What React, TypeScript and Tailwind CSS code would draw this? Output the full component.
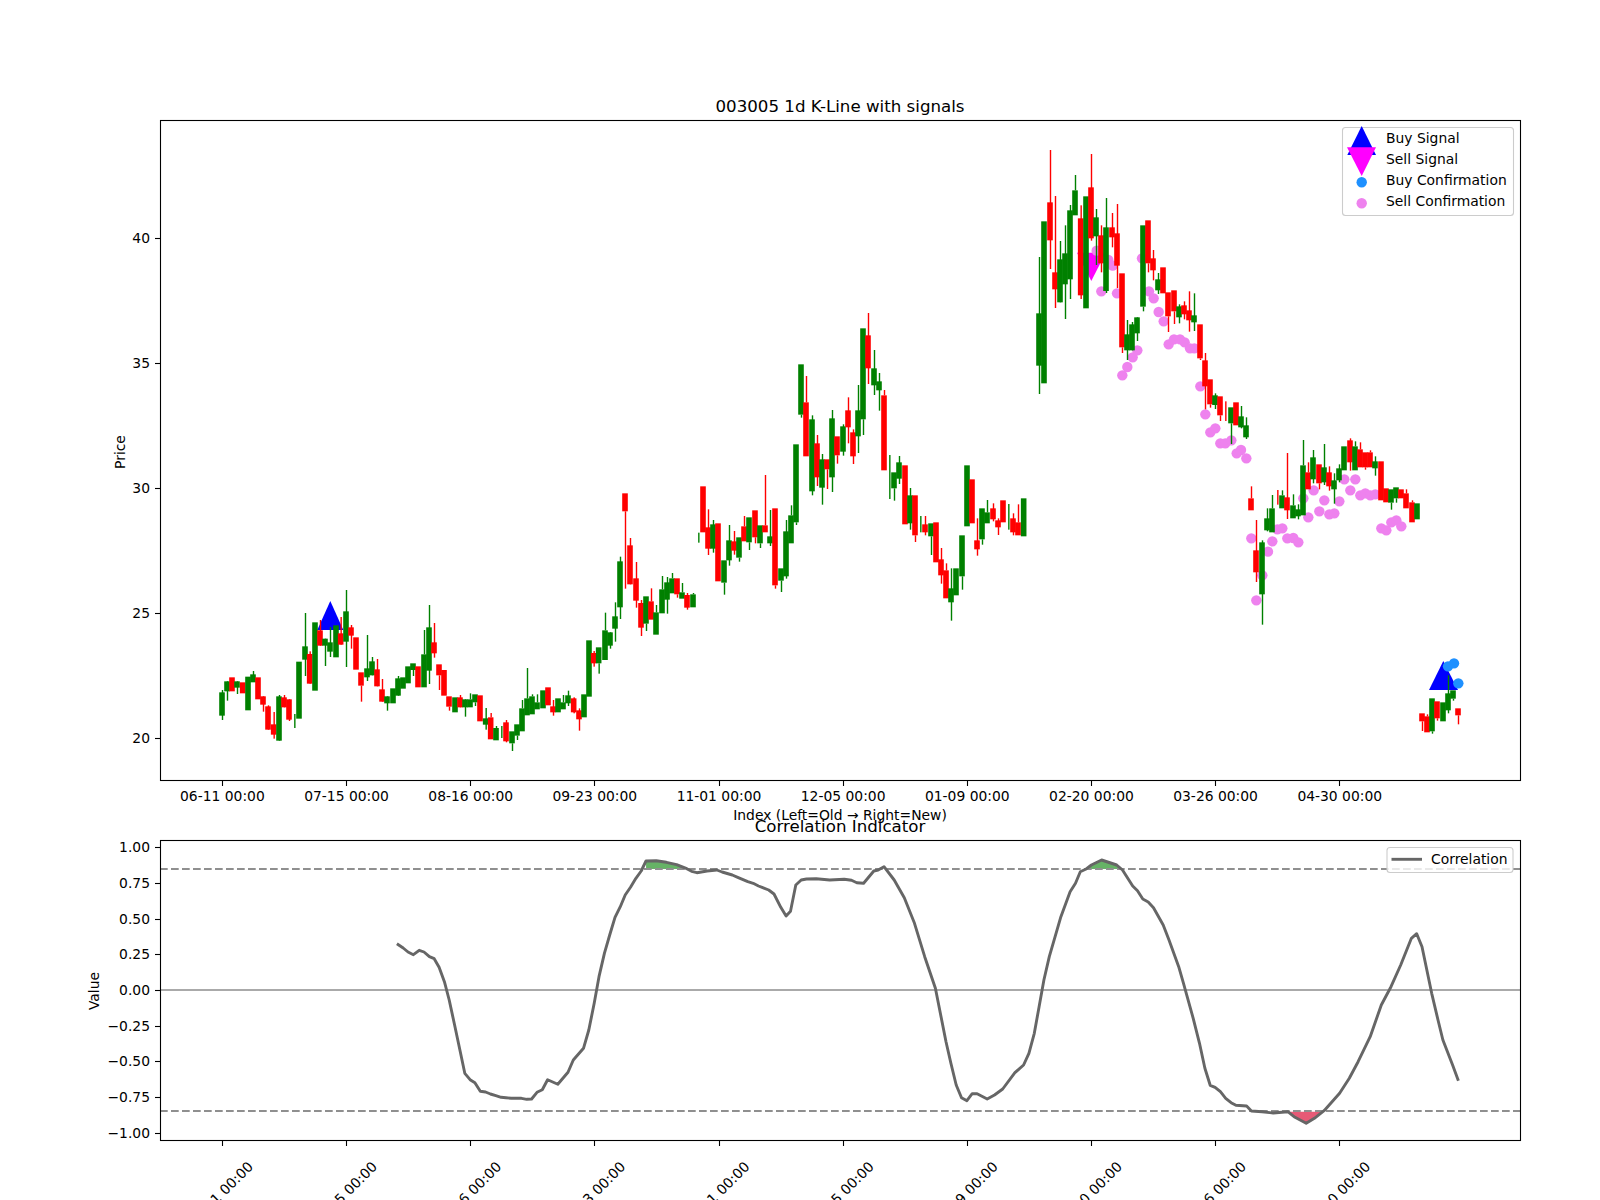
import React from 'react';

// candle rows: [x, green, bodyTop, bodyBottom, wickTop, wickBottom]
// measured in crops scaled 3x, so each block keeps its own origin
type Row = [number, number, number | null, number | null, number?, number?];

const blockA: Row[] = [
  [216,1,637,707,630,720],[231,1,604,634,604,662],[246,0,592,634],[261,1,604,623,604,642],[278,0,607,640],
  [294,1,590,691],[309,1,583,607,573,590],[324,0,592,658],[339,0,649,674,649,695],[354,0,679,749,676,749],
  [371,0,733,764,696,776],[387,1,649,782,645,782],[402,0,652,682,645,682],[417,0,658,719,658,723],[433,1,null,null,702,744],
  [447,1,545,716],[465,1,499,539,399,588],[479,0,522,611,514,611],[495,1,427,632],[510,0,451,497,420,497],
  [525,1,476,497,476,558],[540,1,487,515,441,531],[558,1,436,532],[572,0,460,494,411,494],[588,1,394,485,330,561],
  [603,0,442,467,435,506],[618,0,472,569],[633,0,577,617,617,665],[651,1,565,592,465,603],[666,1,544,586,531,586],
  [681,0,568,619,537,619],[696,0,628,665,597,665],[711,1,649,670,649,692],[729,1,625,670],[744,1,595,647,588,647],
  [759,1,592,626],[774,1,559,610],[789,1,550,570,570,588],[804,0,559,622],[822,1,523,622,450,523],
  [837,1,442,572,375,612],[852,0,487,520,429,533],[867,0,553,586,586,630],[882,0,570,647],[897,0,649,680,680,692],
  [915,1,652,697],[930,0,652,682,645,682],[945,1,658,682,658,710],[960,1,658,682,640,658],[975,1,643,667,667,678],
  [990,0,646,724],[1007,1,715,734,684,749],[1022,0,712,778,699,712],[1038,1,744,781,738,744],[1054,1,null,null,738,774],
  [1068,0,727,784,720,787],[1086,1,754,790,790,813],[1101,1,733,767,767,780],[1116,1,685,754,660,685],[1131,1,655,706,564,655],
  [1146,1,649,703,643,649],[1161,1,667,688,643,667],[1179,1,631,685],[1194,0,622,676],[1209,0,679,697,660,707],
  [1224,1,655,697],[1239,1,667,688,645,667],[1254,1,646,670,632,678],[1271,0,655,697,652,700],[1287,0,691,718,685,752],
  [1302,1,643,712],[1317,1,481,650],[1331,0,519,550,513,560],[1346,1,502,550,550,581],
];

const blockB: Row[] = [
  [45,1,991,1080,938,991],[60,1,997,1037,997,1046],[75,1,949,986,907,1025],[90,1,784,922,770,957],[105,0,580,634,634,866],
  [120,0,736,853,714,853],[138,0,835,902,786,923],[153,0,909,983,900,1008],[168,1,889,971,971,993],[183,0,904,959,865,904],
  [198,1,937,1004,915,937],[216,1,868,940,828,868],[231,1,847,899,831,941],[246,1,835,880,819,835],[261,0,835,883,883,893],
  [276,1,877,896,849,877],[291,0,885,923,879,929],[309,1,883,922,879,883],[325,1,null,null,698,728],[339,0,559,697],
  [354,0,682,746,628,765],[369,1,673,746,660,758],[384,0,670,844],[402,1,781,848,848,884],[417,1,721,781,675,797],
  [432,0,724,752,693,764],[447,1,712,773,773,785],[462,0,679,724,648,679],[477,1,652,727,727,750],[495,0,631,712,712,730],
  [510,1,676,730,730,744],[525,0,676,697,525,676],[540,1,709,730,630,738],[555,0,625,856,856,866],[573,1,805,842,842,876],
  [588,1,694,829,660,836],[603,1,646,730,616,646],[618,1,433,667,667,675],[633,1,193,344,344,353],[648,0,307,469,228,307],
  [666,1,358,574,346,586],[681,0,430,532,405,558],[696,1,478,563,462,614],[711,0,478,508,508,567],[726,1,355,532,330,576],
  [741,0,409,466,466,491],[759,1,379,455,373,467],[774,0,331,382,292,430],[789,0,397,469,388,492],[804,1,331,409,255,459],
  [819,1,85,358,358,405],[834,0,106,205,39,252],[852,1,205,256,150,285],[867,1,244,271,219,332],[882,0,286,511,270,286],
  [898,1,null,null,465,597],[912,1,517,565,565,602],[927,1,487,536,468,552],[945,0,496,673],[960,1,586,670,564,689],
  [975,0,586,706,706,726],[991,1,null,null,648,697],[1005,0,673,697,648,706],[1023,1,670,709,709,765],[1038,0,667,787],
  [1053,0,778,826,744,851],[1068,0,811,895,790,811],[1083,1,865,907,805,962],[1098,1,805,886],[1116,1,706,829,829,869],
  [1131,1,496,679],[1146,0,538,670],[1161,0,721,748,655,767],[1176,1,625,718,718,734],[1191,1,637,670,600,637],
  [1209,0,625,658,610,664],[1224,0,661,682,655,705],[1239,0,601,667],[1255,1,null,null,612,689],[1269,0,655,697,640,706],
  [1284,0,667,706,613,667],[1301,1,595,709],
];

const blockC: Row[] = [
  [57,1,610,767,441,852],[72,1,334,820],[90,0,277,391,120,477],[105,0,487,538,258,594],[120,1,448,577,393,577],
  [135,1,430,523,346,627],[150,1,301,508,285,567],[165,1,241,316,195,241],[182,0,325,556,286,567],[198,1,259,595],
  [213,0,232,385,132,392],[228,1,322,379,297,465],[243,0,376,460,346,487],[258,1,352,543,264,549],[276,0,352,382,309,412],
  [291,0,370,467,282,534],[306,0,490,712,712,729],[321,1,673,721,630,750],[336,1,643,721,636,721],[351,1,622,670,622,693],
  [369,1,346,590,590,604],[384,0,331,460,460,487],[399,0,445,481,420,511],[414,1,508,541,489,552],[429,0,472,550],
  [444,0,547,619,619,666],[462,0,541,604,604,642],[477,1,589,622,583,640],[492,0,586,613,574,628],[507,0,601,631,544,665],
  [522,1,616,637,550,663],[540,0,643,745,745,750],[555,0,751,829,729,898],[570,0,808,883,883,893],[585,1,856,885,850,897],
  [600,0,859,916,916,933],[616,0,null,null,874,933],[633,1,892,940,940,1002],[648,0,877,946],[663,1,919,952,888,955],
  [678,1,946,982,922,987],
];

const blockD: Row[] = [
  [93,0,235,271,199,235],[108,0,391,457,300,486],[126,1,367,523,361,614],[141,1,295,331,265,334],[156,1,265,337,225,265],
  [172,0,null,null,210,254],[186,1,226,265,211,226],[201,0,232,271,99,297],[219,1,256,295,223,256],[234,1,268,289,253,298],
  [249,1,136,286,60,136],[264,0,157,208,127,157],[279,1,112,178,90,190],[297,0,133,190,190,208],[312,1,142,187,72,195],
  [327,0,157,199,139,212],[342,1,181,208,160,251],[357,1,145,181,133,187],[372,1,79,151],[390,0,61,127,55,152],
  [405,1,79,151,64,79],[420,0,88,142,67,88],[435,0,97,142,142,149],[450,0,97,142,91,97],[465,1,124,145,109,167],
  [483,0,124,241],[498,0,205,247],[513,1,208,248,248,269],[528,1,202,235,235,248],[543,0,208,235],
  [558,0,220,265,208,220],[576,0,247,307,241,247],[591,1,250,298],
  [606,0,880,904,904,933],[621,0,889,937,883,889],[636,1,835,934,934,941],[651,0,844,895,895,902],[669,1,847,904],
  [684,1,820,871,766,880],[699,1,811,836,836,842],[714,0,865,886,886,913],
];

const blocks: { ox: number; oy: number; rows: Row[] }[] = [
  { ox: 150, oy: 480, rows: blockA },
  { ox: 590, oy: 300, rows: blockB },
  { ox: 1020, oy: 110, rows: blockC },
  { ox: 1220, oy: 420, rows: blockD },
];

// confirmation dots, crop coords
const pinkC = [[230,422],[265,450],[278,467],[244,544],[291,550],[366,445],[387,544],[401,565],[416,606],[431,634],[446,703],[462,688],[480,688],[494,697],[510,715],[523,715],[541,829],[556,913],[571,967],[586,955],[601,1000],[616,1000],[634,991],[663,1020],[307,796],[322,771],[338,742],[352,721]];
const pinkD = [[50,100],[79,115],[94,355],[109,541],[127,466],[144,395],[157,364],[172,328],[187,325],[202,355],[220,354],[235,367],[250,235],[265,292],[281,211],[298,274],[313,241],[328,283],[343,280],[358,244],[373,178],[391,211],[406,178],[421,226],[436,220],[451,226],[466,223],[484,325],[499,331],[514,307],[529,301],[544,319]];
const blueD = [[684,739],[702,730],[715,790]];

// correlation curve, from crops scaled 2.063 x 3
const curveLeft = [[695,521],[708,534],[718,546],[729,554],[741,541],[751,546],[762,560],[772,566],[782,592],[793,635],[803,690],[814,765],[825,840],[835,910],[846,929],[856,938],[867,964],[878,966],[888,972],[899,977],[910,982],[920,983],[931,985],[952,985],[963,988],[973,987],[984,967],[995,959],[1006,929],[1027,943],[1048,907],[1059,870],[1080,835],[1091,780],[1102,700],[1112,620],[1123,550],[1134,495],[1145,442],[1156,410],[1166,375],[1177,352],[1188,325],[1199,303],[1209,273],[1230,272],[1251,277],[1272,284],[1293,296],[1303,304],[1314,308],[1335,303],[1355,300],[1366,306],[1387,315],[1398,322],[1419,335],[1430,340],[1441,348],[1462,360],[1473,372],[1487,412],[1498,438],[1507,424],[1518,345],[1529,330],[1540,327],[1560,326]];
const curveRight = [[20,330],[50,328],[65,331],[76,338],[90,340],[111,303],[120,300],[132,290],[153,330],[174,383],[195,460],[216,560],[238,655],[249,735],[260,815],[270,880],[281,945],[292,983],[303,992],[314,971],[324,971],[345,987],[360,975],[377,957],[402,908],[420,885],[431,850],[442,790],[452,710],[462,630],[473,560],[485,500],[497,440],[516,365],[527,340],[537,305],[548,298],[560,285],[581,270],[612,285],[624,300],[645,348],[655,362],[666,387],[677,396],[688,413],[708,465],[720,510],[740,590],[750,640],[770,745],[783,820],[794,895],[805,946],[815,952],[826,965],[837,985],[848,998],[858,1006],[880,1008],[890,1023],[912,1025],[935,1029],[965,1025],[980,1042],[1003,1060],[1020,1045],[1040,1022],[1072,970],[1092,925],[1110,875],[1135,800],[1158,705],[1178,650],[1198,585],[1220,505],[1231,491],[1242,530],[1262,670],[1275,750],[1285,810],[1305,885],[1317,932]];

const lx = (z: number) => 60 + z / 2.063;
const rx = (z: number) => 820 + z / 2.063;
const cy = (z: number) => 770 + z / 3;
const curve = [
  ...curveLeft.map(([x, y]) => `${lx(x).toFixed(1)},${cy(y).toFixed(1)}`),
  ...curveRight.map(([x, y]) => `${rx(x).toFixed(1)},${cy(y).toFixed(1)}`),
].join(' ');

const dates = ['06-11', '07-15', '08-16', '09-23', '11-01', '12-05', '01-09', '02-20', '03-26', '04-30'];
const tickX = dates.map((_, i) => 222.4 + 124.15 * i);
const snap = (v: number) => Math.round(v) + 0.5;
const snapX = (v: number) => Math.floor(v) + 0.5;

const GREEN = '#008000';
const RED = '#ff0000';
const TOP_1 = 116; // where the first svg starts on the page
const TOP_2 = 836;

const PriceChart = () => (
  <svg width={1600} height={690} viewBox={`0 ${TOP_1} 1600 690`} className="block">
    {/* signals sit under the candles */}
    <polygon points="330.3,601 317.3,630 343.3,630" fill="#0000ff" />
    <polygon points="1443.3,661 1429,690 1458,690" fill="#0000ff" />
    <polygon points="1091.3,281 1077,252.7 1105.7,252.7" fill="#ff00ff" />
    {pinkC.map(([x, y], i) => (
      <circle key={i} cx={1020 + x / 3} cy={110 + y / 3} r={5.2} fill="#ee82ee" />
    ))}
    {pinkD.map(([x, y], i) => (
      <circle key={i} cx={1220 + x / 3} cy={420 + y / 3} r={5.2} fill="#ee82ee" />
    ))}
    {blocks.map((b, bi) =>
      b.rows.map(([x, g, t, bot, wt, wb], i) => {
        const color = g ? GREEN : RED;
        const px = b.ox + x / 3;
        return (
          <g key={`${bi}-${i}`}>
            {wt !== undefined && wb !== undefined && (
              <rect x={px - 0.2} y={b.oy + wt / 3} width={1.4} height={(wb - wt) / 3} fill={color} />
            )}
            {t !== null && bot !== null && (
              <rect x={px - 2.8} y={b.oy + t / 3} width={5.6} height={(bot - t) / 3} fill={color} />
            )}
          </g>
        );
      })
    )}
    {blueD.map(([x, y], i) => (
      <circle key={i} cx={1220 + x / 3} cy={420 + y / 3} r={5.2} fill="#1e90ff" />
    ))}

    <rect x={160.5} y={120.5} width={1360} height={660} fill="none" stroke="black" strokeWidth={1.1} />
    {[20, 25, 30, 35, 40].map((v) => {
      const y = 738.3 - (v - 20) * 25;
      return (
        <g key={v}>
          <line x1={155} x2={160} y1={snap(y)} y2={snap(y)} stroke="black" strokeWidth={1.1} />
          <text x={150} y={y + 5} textAnchor="end" fontSize={13.89}>{v}</text>
        </g>
      );
    })}
    {tickX.map((x, i) => (
      <g key={i}>
        <line x1={snapX(x)} x2={snapX(x)} y1={781} y2={786} stroke="black" strokeWidth={1.1} />
        <text x={x} y={801} textAnchor="middle" fontSize={13.89}>{dates[i]} 00:00</text>
      </g>
    ))}
    <text x={125} y={452} textAnchor="middle" fontSize={13.89} transform="rotate(-90 125 452)">Price</text>

    {/* legend */}
    <rect x={1342.5} y={127.5} width={171} height={88} rx={3} fill="white" fillOpacity={0.8} stroke="#cccccc" strokeWidth={1.1} />
    <polygon points="1361.7,126 1347.3,155 1376,155" fill="#0000ff" />
    <polygon points="1361.7,176 1347,147.3 1376,147.3" fill="#ff00ff" />
    <circle cx={1361.7} cy={182.3} r={5.2} fill="#1e90ff" />
    <circle cx={1361.7} cy={203.3} r={5.2} fill="#ee82ee" />
    <text x={1386} y={143} fontSize={13.89}>Buy Signal</text>
    <text x={1386} y={164} fontSize={13.89}>Sell Signal</text>
    <text x={1386} y={185} fontSize={13.89}>Buy Confirmation</text>
    <text x={1386} y={206} fontSize={13.89}>Sell Confirmation</text>
  </svg>
);

const CorrelationChart = () => (
  <svg width={1600} height={364} viewBox={`0 ${TOP_2} 1600 364`} className="block">
    <polygon
      points={`${lx(1209)},${cy(297)} ${lx(1209)},${cy(273)} ${lx(1230)},${cy(272)} ${lx(1251)},${cy(277)} ${lx(1272)},${cy(284)} ${lx(1293)},${cy(297)}`}
      fill="#008000"
      fillOpacity={0.6}
    />
    <polygon
      points={`${rx(553)},${cy(297)} ${rx(560)},${cy(285)} ${rx(581)},${cy(270)} ${rx(612)},${cy(285)} ${rx(620)},${cy(297)}`}
      fill="#008000"
      fillOpacity={0.6}
    />
    <polygon
      points={`${rx(965)},${cy(1025)} ${rx(980)},${cy(1042)} ${rx(1003)},${cy(1060)} ${rx(1020)},${cy(1045)} ${rx(1038)},${cy(1025)}`}
      fill="#dc143c"
      fillOpacity={0.7}
    />
    <line x1={160} x2={1520} y1={869} y2={869} stroke="#8f8f8f" strokeWidth={2} strokeDasharray="7.7 3.3" />
    <line x1={160} x2={1520} y1={1111} y2={1111} stroke="#8f8f8f" strokeWidth={2} strokeDasharray="7.7 3.3" />
    <line x1={160} x2={1520} y1={990} y2={990} stroke="#aaaaaa" strokeWidth={2} />
    <polyline points={curve} fill="none" stroke="#666666" strokeWidth={2.9} strokeLinejoin="round" />

    <rect x={160.5} y={840.5} width={1360} height={300} fill="none" stroke="black" strokeWidth={1.1} />
    {[1, 0.75, 0.5, 0.25, 0, -0.25, -0.5, -0.75, -1].map((v) => {
      const y = 990 - 142.67 * v;
      return (
        <g key={v}>
          <line x1={155} x2={160} y1={snap(y)} y2={snap(y)} stroke="black" strokeWidth={1.1} />
          <text x={150} y={y + 5} textAnchor="end" fontSize={13.89}>
            {v < 0 ? `\u2212${Math.abs(v).toFixed(2)}` : v.toFixed(2)}
          </text>
        </g>
      );
    })}
    {tickX.map((x, i) => (
      <g key={i}>
        <line x1={snapX(x)} x2={snapX(x)} y1={1141} y2={1146} stroke="black" strokeWidth={1.1} />
        <text
          x={x - 2}
          y={1194}
          dy={5}
          textAnchor="middle"
          fontSize={13.89}
          transform={`rotate(-45 ${x - 2} 1194)`}
        >
          {dates[i]} 00:00
        </text>
      </g>
    ))}
    <text x={99} y={991} textAnchor="middle" fontSize={13.89} transform="rotate(-90 99 991)">Value</text>

    <rect x={1387} y={847.5} width={126} height={25} rx={3} fill="white" fillOpacity={0.8} stroke="#cccccc" strokeWidth={1.1} />
    <line x1={1391.5} x2={1422} y1={859.3} y2={859.3} stroke="#666666" strokeWidth={2.9} />
    <text x={1431} y={864} fontSize={13.89}>Correlation</text>
  </svg>
);

export default function App() {
  return (
    <div className="w-[1600px] h-[1200px] overflow-hidden bg-white text-black font-['DejaVu_Sans',sans-serif]">
      <div className="pt-[97px] h-[116px] text-center text-[16.67px] leading-[19px] pl-[80px]">
        003005 1d K-Line with signals
      </div>
      <PriceChart />
      <div className="h-[18px] text-center text-[13.89px] leading-[18px] pl-[80px]">
        Index (Left=Old → Right=New)
      </div>
      <div className="-mt-[6px] h-[18px] text-center text-[16.67px] leading-[18px] pl-[80px]">
        Correlation Indicator
      </div>
      <CorrelationChart />
    </div>
  );
}
